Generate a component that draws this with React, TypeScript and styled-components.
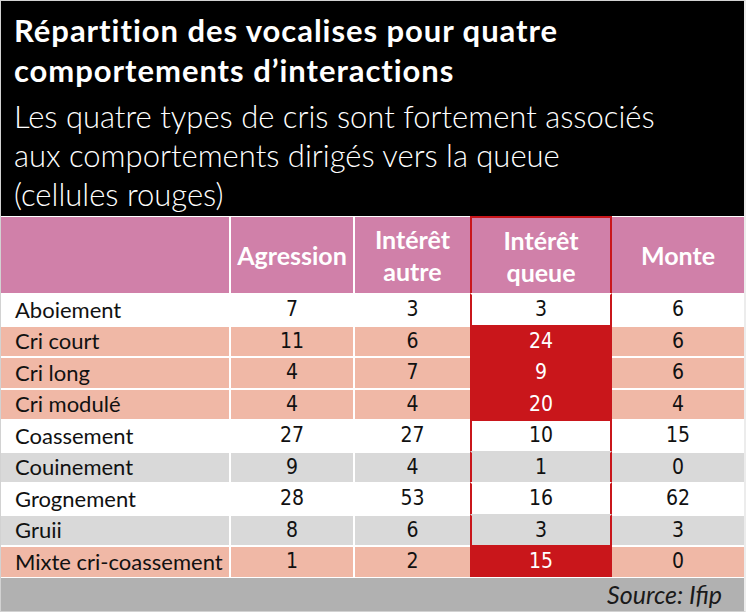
import React from 'react';
import styled, { createGlobalStyle } from 'styled-components';

const Global = createGlobalStyle`
  html, body { margin: 0; padding: 0; background: #fff; }
  body { font-family: Lato, "Liberation Sans", sans-serif; }
  * { box-sizing: border-box; }
`;

const RED = '#c9161b';
const PINK = '#d080a9';
const SALMON = '#f0b8a6';
const GRAY = '#d9d9d9';

const Card = styled.div`
  width: 746px;
  height: 612px;
  border: 1px solid #d2d2d2;
  border-right-width: 2px;
  border-right-color: #ececec;
  background: #fff;
  display: flex;
  flex-direction: column;
`;

const Banner = styled.header`
  background: #000;
  color: #fff;
  height: 215px;
  padding: 9px 13px 0;
`;

const Title = styled.h1`
  margin: 0;
  font-family: Lato, sans-serif;
  font-weight: 700;
  font-size: 31px;
  letter-spacing: 0.95px;
  line-height: 40px;
`;

const Subtitle = styled.p`
  margin: 7px 0 0;
  font-family: Lato, sans-serif;
  font-weight: 300;
  font-size: 31px;
  line-height: 39px;
`;

const Row = styled.div<{ $h: number }>`
  display: grid;
  grid-template-columns: 228px 124px 117px 142px 1fr;
  height: ${(p) => p.$h}px;
`;

type Kind = 'head' | 'white' | 'salmon' | 'gray' | 'red';

const bg = (k: Kind) =>
  k === 'head' ? PINK : k === 'salmon' ? SALMON : k === 'gray' ? GRAY : k === 'red' ? RED : '#fff';

const Cell = styled.div<{ $kind: Kind; $left?: string; $right?: string; $top: string; $topW?: number; $label?: boolean }>`
  background: ${(p) => bg(p.$kind)};
  border-top: ${(p) => p.$topW ?? 2}px solid ${(p) => p.$top};
  border-left: ${(p) => (p.$left ? `2px solid ${p.$left}` : 'none')};
  border-right: ${(p) => (p.$right ? `2px solid ${p.$right}` : 'none')};
  display: flex;
  align-items: center;
  justify-content: ${(p) => (p.$label ? 'flex-start' : 'center')};
  padding-left: ${(p) => (p.$label ? '14px' : '0')};
  color: ${(p) => (p.$kind === 'red' ? '#fff' : '#111')};
  font-family: ${(p) => (p.$label ? 'Lato, sans-serif' : '"DejaVu Sans", sans-serif')};
  font-stretch: ${(p) => (p.$label ? 'normal' : 'condensed')};
  font-weight: 400;
  font-size: ${(p) => (p.$label ? '22px' : '21px')};
  line-height: 1;
  white-space: nowrap;
`;

const HeadText = styled.span`
  font-family: Lato, sans-serif;
  font-weight: 700;
  font-size: 25px;
  line-height: 32px;
  color: #fff;
  text-align: center;
`;

const Footer = styled.footer`
  flex: 1;
  background: #b1b1b1;
  border-top: 1px solid #fff;
  display: flex;
  align-items: center;
  justify-content: flex-end;
  padding-right: 22px;
`;

const Source = styled.span`
  font-family: Lato, sans-serif;
  font-style: italic;
  font-size: 25px;
  color: #1a1a1a;
`;

type RowData = { label: string; bg: Kind; vals: number[]; red: boolean };

const rows: RowData[] = [
  { label: 'Aboiement', bg: 'white', vals: [7, 3, 3, 6], red: false },
  { label: 'Cri court', bg: 'salmon', vals: [11, 6, 24, 6], red: true },
  { label: 'Cri long', bg: 'salmon', vals: [4, 7, 9, 6], red: true },
  { label: 'Cri modulé', bg: 'salmon', vals: [4, 4, 20, 4], red: true },
  { label: 'Coassement', bg: 'white', vals: [27, 27, 10, 15], red: false },
  { label: 'Couinement', bg: 'gray', vals: [9, 4, 1, 0], red: false },
  { label: 'Grognement', bg: 'white', vals: [28, 53, 16, 62], red: false },
  { label: 'Gruii', bg: 'gray', vals: [8, 6, 3, 3], red: false },
  { label: 'Mixte cri-coassement', bg: 'salmon', vals: [1, 2, 15, 0], red: true },
];

const headers = ['Agression', 'Intérêt\nautre', 'Intérêt\nqueue', 'Monte'];

export default function App() {
  return (
    <>
      <Global />
      <Card>
        <Banner>
          <Title>
            Répartition des vocalises pour quatre
            <br />
            comportements d’interactions
          </Title>
          <Subtitle>
            Les quatre types de cris sont fortement associés
            <br />
            aux comportements dirigés vers la queue
            <br />
            (cellules rouges)
          </Subtitle>
        </Banner>
        <Row $h={77}>
          <Cell $kind="head" $top="#fff" $topW={1} />
          {headers.map((h, i) => (
            <Cell
              key={h}
              $kind="head"
              $top={i === 2 ? RED : '#fff'}
              $topW={i === 2 ? 2 : 1}
              $left={i === 3 ? undefined : i === 2 ? RED : '#fff'}
              $right={i === 2 ? RED : undefined}
            >
              <HeadText>
                {h.split('\n').map((l, j) => (
                  <React.Fragment key={j}>
                    {j > 0 && <br />}
                    {l}
                  </React.Fragment>
                ))}
              </HeadText>
            </Cell>
          ))}
        </Row>
        {rows.map((r, ri) => {
          const prevRed = ri > 0 && rows[ri - 1].red;
          return (
            <Row key={r.label} $h={31.5}>
              <Cell $kind={r.bg} $top="#fff" $label>
                {r.label}
              </Cell>
              {r.vals.map((v, i) => {
                const hl = i === 2;
                const kind: Kind = hl && r.red ? 'red' : r.bg;
                return (
                  <Cell
                    key={i}
                    $kind={kind}
                    $top={hl ? (r.red || prevRed ? RED : kind === 'gray' ? GRAY : '#fff') : '#fff'}
                    $left={i === 3 ? undefined : hl ? RED : '#fff'}
                    $right={hl ? RED : undefined}
                  >
                    {v}
                  </Cell>
                );
              })}
            </Row>
          );
        })}
        <Footer>
          <Source>Source: Ifip</Source>
        </Footer>
      </Card>
    </>
  );
}
